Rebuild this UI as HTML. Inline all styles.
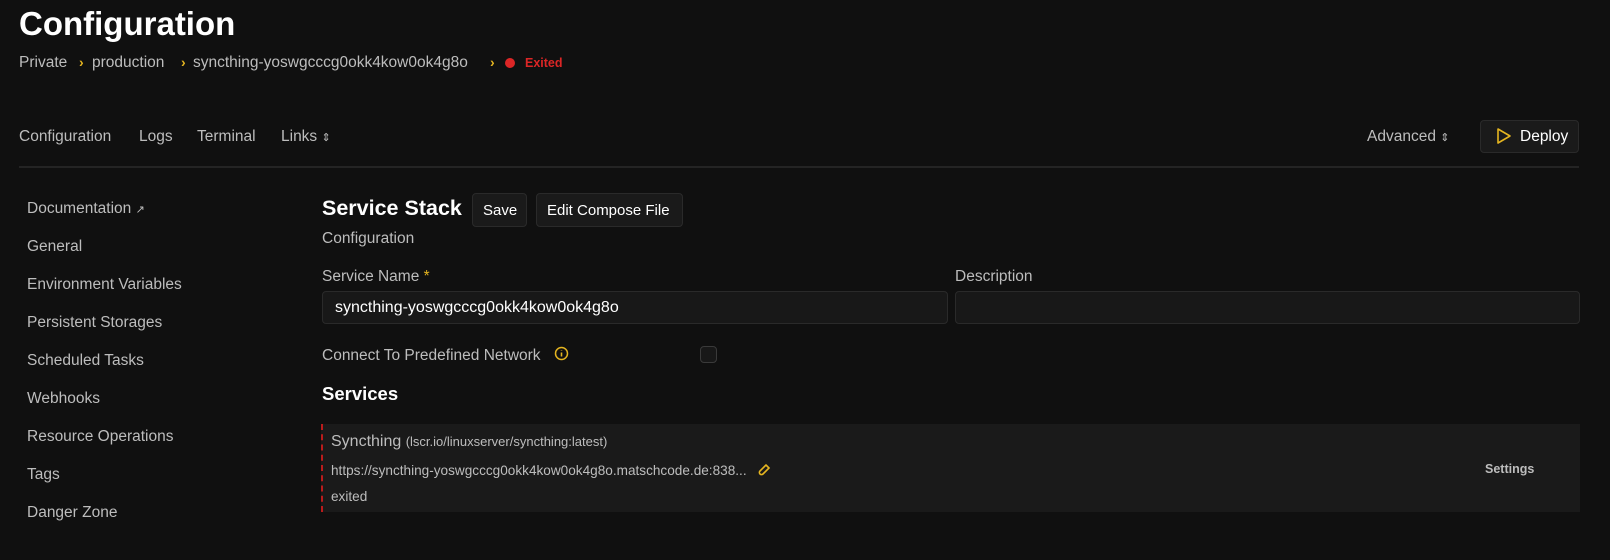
<!DOCTYPE html>
<html><head><meta charset="utf-8"><style>
*{box-sizing:border-box;margin:0;padding:0}
body{width:1610px;height:560px;background:#101010;font-family:"Liberation Sans",sans-serif;color:#d4d4d4;position:relative;overflow:hidden}
.a{position:absolute;white-space:nowrap}
.h1{left:19px;top:5px;font-size:33px;font-weight:bold;color:#fff}
.bc{top:54px;font-size:15.5px;color:#bdbdbd}
.ch{color:#e5b520;font-weight:bold;font-size:14px;top:54px}
.nav{top:128px;font-size:15.5px;color:#bdbdbd}
.side{left:27px;font-size:15.5px;color:#bdbdbd}
.btn{background:#1a1a1a;border:1px solid #2a2a2a;border-radius:4px;color:#fff;font-size:15px}
.inp{background:#181818;border:1px solid #2a2a2a;border-radius:4px}
</style></head><body>
<div class="a h1">Configuration</div>
<div class="a bc" style="left:19px">Private</div>
<div class="a bc ch" style="left:79px">›</div>
<div class="a bc" style="left:92px">production</div>
<div class="a bc ch" style="left:181px">›</div>
<div class="a bc" style="left:193px">syncthing-yoswgcccg0okk4kow0ok4g8o</div>
<div class="a bc ch" style="left:490px">›</div>
<div class="a" style="left:505px;top:58px;width:10px;height:10px;border-radius:50%;background:#dc2626"></div>
<div class="a" style="left:525px;top:56px;font-size:12.5px;font-weight:bold;color:#dc2626">Exited</div>

<div class="a nav" style="left:19px">Configuration</div>
<div class="a nav" style="left:139px">Logs</div>
<div class="a nav" style="left:197px">Terminal</div>
<div class="a nav" style="left:281px">Links <span style="font-size:11px">⇕</span></div>
<div class="a nav" style="left:1367px">Advanced <span style="font-size:11px">⇕</span></div>
<div class="a btn" style="left:1480px;top:120px;width:99px;height:33px"></div>
<svg class="a" style="left:1495px;top:127px" width="18" height="18" viewBox="0 0 18 18"><path d="M3 2 L15 9 L3 16 Z" fill="none" stroke="#e5b520" stroke-width="1.6" stroke-linejoin="round"/></svg>
<div class="a" style="left:1520px;top:128px;font-size:15.5px;color:#fff">Deploy</div>
<div class="a" style="left:19px;top:166px;width:1560px;height:2px;background:#242424"></div>

<div class="a side" style="top:200px">Documentation <span style="font-size:11px">↗</span></div>
<div class="a side" style="top:238px">General</div>
<div class="a side" style="top:276px">Environment Variables</div>
<div class="a side" style="top:314px">Persistent Storages</div>
<div class="a side" style="top:352px">Scheduled Tasks</div>
<div class="a side" style="top:390px">Webhooks</div>
<div class="a side" style="top:428px">Resource Operations</div>
<div class="a side" style="top:466px">Tags</div>
<div class="a side" style="top:504px">Danger Zone</div>

<div class="a" style="left:322px;top:196px;font-size:21.5px;font-weight:bold;color:#fff">Service Stack</div>
<div class="a btn" style="left:472px;top:193px;width:55px;height:34px;padding:8px 0 0 10px">Save</div>
<div class="a btn" style="left:536px;top:193px;width:147px;height:34px;padding:8px 0 0 10px">Edit Compose File</div>
<div class="a" style="left:322px;top:230px;font-size:15.5px;color:#bdbdbd">Configuration</div>
<div class="a" style="left:322px;top:268px;font-size:15.5px;color:#bdbdbd">Service Name <span style="color:#e5b520">*</span></div>
<div class="a" style="left:955px;top:268px;font-size:15.5px;color:#bdbdbd">Description</div>
<div class="a inp" style="left:322px;top:291px;width:626px;height:33px;padding:7px 0 0 12px;font-size:16px;color:#fff">syncthing-yoswgcccg0okk4kow0ok4g8o</div>
<div class="a inp" style="left:955px;top:291px;width:625px;height:33px"></div>
<div class="a" style="left:322px;top:347px;font-size:15.5px;color:#bdbdbd">Connect To Predefined Network</div>
<svg class="a" style="left:554px;top:346px" width="15" height="15" viewBox="0 0 15 15"><circle cx="7.5" cy="7.5" r="6" fill="none" stroke="#e5b520" stroke-width="1.5"/><path d="M7.5 6.5v4M7.5 4v.5" stroke="#e5b520" stroke-width="1.6"/></svg>
<div class="a" style="left:700px;top:346px;width:17px;height:17px;border:1px solid #3a3a3a;border-radius:4px;background:#181818"></div>
<div class="a" style="left:322px;top:383px;font-size:18.5px;font-weight:bold;color:#fff">Services</div>

<div class="a" style="left:321px;top:424px;width:1259px;height:88px;background:#1a1a1a;border-left:2px dashed #b91c1c"></div>
<div class="a" style="left:331px;top:433px;font-size:16px;color:#bdbdbd">Syncthing <span style="font-size:13px">(lscr.io/linuxserver/syncthing:latest)</span></div>
<div class="a" style="left:331px;top:463px;font-size:13.6px;color:#bdbdbd">https://syncthing-yoswgcccg0okk4kow0ok4g8o.matschcode.de:838...</div>
<svg class="a" style="left:757px;top:462px" width="15" height="15" viewBox="0 0 15 15"><path d="M9 3l3 3-6 6a2 2 0 0 1-3-3l6-6" fill="none" stroke="#e5b520" stroke-width="1.6" stroke-linecap="round"/></svg>
<div class="a" style="left:331px;top:489px;font-size:13.6px;color:#bdbdbd">exited</div>
<div class="a" style="left:1485px;top:462px;font-size:12.5px;font-weight:bold;color:#bdbdbd">Settings</div>
</body></html>
